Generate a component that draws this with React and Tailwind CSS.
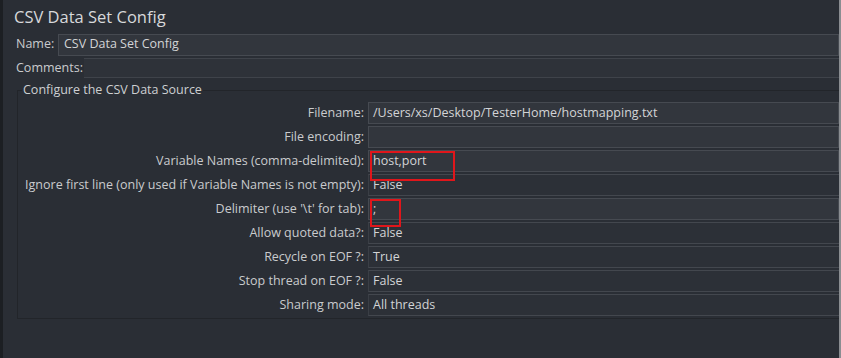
import React from "react";

const rows = [
  { label: "Filename:", value: "/Users/xs/Desktop/TesterHome/hostmapping.txt", kind: "text" },
  { label: "File encoding:", value: "", kind: "text" },
  { label: "Variable Names (comma-delimited):", value: "host,port", kind: "text", mark: "w-[85px] h-[30px]" },
  { label: "Ignore first line (only used if Variable Names is not empty):", value: "False", kind: "combo" },
  { label: "Delimiter (use '\\t' for tab):", value: ";", kind: "text", mark: "w-[31px] h-[28px]" },
  { label: "Allow quoted data?:", value: "False", kind: "combo" },
  { label: "Recycle on EOF ?:", value: "True", kind: "combo" },
  { label: "Stop thread on EOF ?:", value: "False", kind: "combo" },
  { label: "Sharing mode:", value: "All threads", kind: "combo" },
];

function Field({ row }) {
  const box =
    row.kind === "text"
      ? "bg-[#32363d] border border-[#464a51]"
      : "bg-[#2c3037] border-y border-[#43474e] border-l border-l-[#3a3e45]";
  return (
    <div className={`relative h-[22px] flex items-center pl-[4px] ${box}`}>
      <span className="text-[#d2d4d6]">{row.value}</span>
      {row.mark && (
        <div className={`absolute z-10 left-[1px] top-[0px] border-2 border-[#e0161b] ${row.mark}`} />
      )}
    </div>
  );
}

export default function App() {
  return (
    <div
      className="w-[841px] h-[358px] bg-[#2a2e35] flex text-[12.5px] text-[#c9cbcd] overflow-hidden"
      style={{ fontFamily: '"Open Sans", "Liberation Sans", sans-serif' }}
    >
      <div className="w-[3px] bg-[#1c1f23]" />
      <div className="flex-1 flex flex-col pl-[11px] pt-[2px]">
        <div className="h-[31px] flex items-center text-[16.5px] text-[#d7d9db]">CSV Data Set Config</div>

        <div className="flex items-center h-[23px] pl-[2px]">
          <span className="w-[42px]">Name:</span>
          <div className="flex-1 h-[22px] bg-[#32363d] border border-[#464a51] flex items-center pl-[5px] text-[#d2d4d6]">
            CSV Data Set Config
          </div>
        </div>

        <div className="flex items-center h-[22px] pl-[2px] mt-[1px]">
          <span className="w-[68px]">Comments:</span>
          <div className="flex-1 h-[20px] bg-[#2e3239] border-y border-[#3f434a]" />
        </div>

        <div className="relative mt-[11px] ml-[3px] h-[229px] border-l border-b border-t border-[#22252a]">
          <span className="absolute left-[4px] top-[-10px] px-[1px] bg-[#2a2e35] text-[#cdd0d2]">
            Configure the CSV Data Source
          </span>
          <div className="pt-[10px] flex flex-col">
            {rows.map((row) => (
              <div key={row.label} className="flex items-center h-[24px]">
                <div className="w-[350px] text-right pr-[4px] whitespace-nowrap">{row.label}</div>
                <div className="flex-1">
                  <Field row={row} />
                </div>
              </div>
            ))}
          </div>
        </div>
      </div>
      <div className="w-[2px] bg-[#8a8d91]" />
    </div>
  );
}
